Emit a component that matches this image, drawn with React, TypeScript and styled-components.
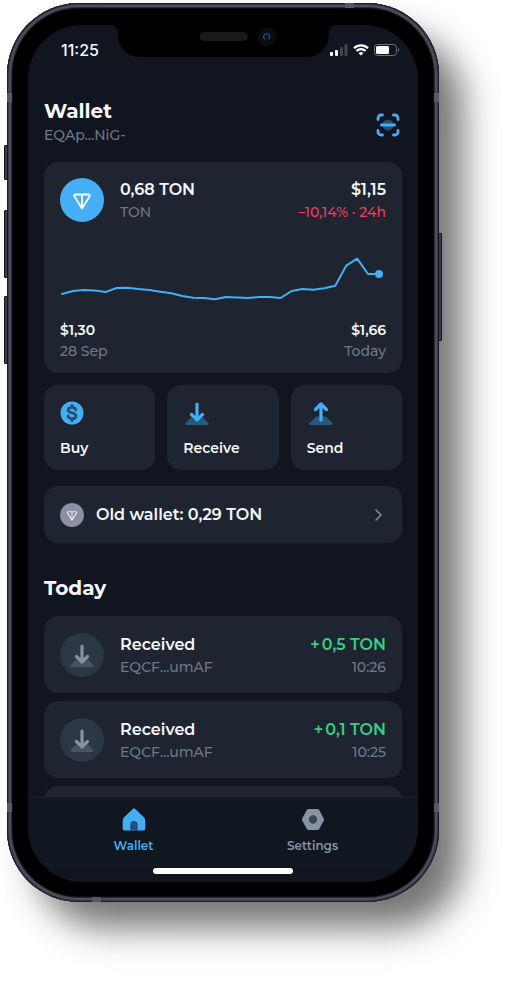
import React from "react";
import styled, { createGlobalStyle } from "styled-components";

const color = {
  page: "#10151f",
  card: "#1e2531",
  text: "#f5f7fa",
  muted: "#707787",
  accent: "#45aef5",
  accentDim: "#28587c",
  negative: "#e93f63",
  positive: "#39cc83",
  icon: "#8994a3",
};

const GlobalStyle = createGlobalStyle`
  *, *::before, *::after { box-sizing: border-box; }
  body {
    margin: 0;
    background: #fff;
    color: ${color.text};
    font-family: Montserrat, Inter, sans-serif;
    -webkit-font-smoothing: antialiased;
  }
  h1, h2, p, ul { margin: 0; padding: 0; }
  ul { list-style: none; }
  button { font: inherit; color: inherit; border: 0; text-align: left; cursor: pointer; }
  svg { display: block; }
`;

const Stage = styled.div`
  display: flex;
  height: 100vh;
  min-height: 640px;
  padding: 3px 77px 82px 7px;
  overflow: hidden;
`;

const Device = styled.div`
  position: relative;
  display: flex;
  flex: 1;
  min-width: 0;
  padding: 22px 21px 20px;
  border-radius: 72px;
  background: #000;
  box-shadow:
    inset 0 0 0 1px #1f1e28,
    inset 0 0 0 2px #3b3947,
    inset 0 0 0 4px #4f4d5c,
    inset 0 0 0 5px #2a2933,
    inset 0 0 0 6px #0c0c10,
    26px 28px 34px -3px rgba(0, 0, 0, 0.52),
    30px 34px 56px rgba(0, 0, 0, 0.05);
`;

const SideKey = styled.span<{ $side: "left" | "right"; $top: number; $size: number }>`
  position: absolute;
  ${(p) => p.$side}: -3px;
  top: ${(p) => p.$top}%;
  width: 4px;
  height: ${(p) => p.$size}%;
  border: 1px solid #14141b;
  border-radius: 1px;
  background: #3b3a47;
`;

const SideBand = styled.span<{ $side: "left" | "right"; $edge: "top" | "bottom" }>`
  position: absolute;
  ${(p) => p.$side}: 0;
  ${(p) => p.$edge}: 90px;
  width: 5px;
  height: 9px;
  background: #5b5862;
`;

const EndBand = styled.span<{ $edge: "top" | "bottom" }>`
  position: absolute;
  ${(p) => p.$edge}: 0;
  ${(p) => (p.$edge === "top" ? "right" : "left")}: 85px;
  width: 9px;
  height: 5px;
  background: #5b5761;
`;

const Screen = styled.main`
  position: relative;
  display: flex;
  flex: 1;
  flex-direction: column;
  min-width: 0;
  overflow: hidden;
  border-radius: 54px;
  background: ${color.page};
`;

const Notch = styled.div`
  position: absolute;
  top: 0;
  left: 50%;
  display: flex;
  align-items: center;
  justify-content: flex-end;
  gap: 9px;
  width: 54%;
  height: 32px;
  padding: 0 52px 9px 0;
  transform: translateX(-50%);
  border-radius: 0 0 22px 22px;
  background: #000;
  &::before, &::after {
    content: "";
    position: absolute;
    top: 0;
    width: 6px;
    height: 6px;
  }
  &::before { right: 100%; background: radial-gradient(circle at 0 100%, transparent 5px, #000 6px); }
  &::after { left: 100%; background: radial-gradient(circle at 100% 100%, transparent 5px, #000 6px); }
`;

const Speaker = styled.span`
  width: 48px;
  height: 9px;
  border-radius: 5px;
  background: #191919;
`;

const StatusBar = styled.div`
  display: flex;
  flex-shrink: 0;
  align-items: center;
  justify-content: space-between;
  height: 49px;
  padding: 0 18px 0 33px;
`;

const Clock = styled.time`
  font-family: Inter, sans-serif;
  font-size: 16px;
  font-weight: 500;
`;

const Indicators = styled.div`
  display: flex;
  align-items: center;
  gap: 5px;
`;

const Header = styled.header`
  display: flex;
  flex-shrink: 0;
  align-items: center;
  justify-content: space-between;
  padding: 23px 16px 17px;
`;

const Heading = styled.h1`
  font-size: 20px;
  font-weight: 700;
  line-height: 28px;
`;

const IconButton = styled.button`
  padding: 8px 0 0;
  background: none;
`;

const Content = styled.div`
  flex: 1;
  min-height: 0;
  padding: 0 16px;
  overflow: hidden;
`;

const Muted = styled.p`
  color: ${color.muted};
  font-size: 14px;
  font-weight: 500;
  line-height: 20px;
`;

const Title = styled.p<{ $tone?: string }>`
  color: ${(p) => p.$tone ?? color.text};
  font-size: 16px;
  font-weight: 600;
  line-height: 24px;
`;

const Change = styled(Muted)`
  color: ${color.negative};
`;

const Card = styled.section`
  padding: 16px 16px 12px;
  border-radius: 14px;
  background: ${color.card};
`;

const AssetRow = styled.div`
  display: flex;
  align-items: center;
  gap: 16px;
`;

const Stack = styled.div<{ $end?: boolean }>`
  flex: ${(p) => (p.$end ? "none" : "1")};
  min-width: 0;
  text-align: ${(p) => (p.$end ? "right" : "left")};
`;

const Avatar = styled.span<{ $size: number; $fill: string }>`
  display: flex;
  flex-shrink: 0;
  align-items: center;
  justify-content: center;
  width: ${(p) => p.$size}px;
  height: ${(p) => p.$size}px;
  border-radius: 50%;
  background: ${(p) => p.$fill};
`;

const ChartArea = styled.div`
  padding: 28px 0 10px;
  svg { width: 100%; height: auto; overflow: visible; }
`;

const ChartLegend = styled.div`
  display: flex;
  justify-content: space-between;
`;

const Price = styled.p`
  font-size: 14px;
  font-weight: 600;
  line-height: 21px;
`;

const Actions = styled.div`
  display: grid;
  grid-template-columns: repeat(3, 1fr);
  gap: 12px;
  margin: 12px 0 16px;
`;

const ActionButton = styled.button`
  display: flex;
  flex-direction: column;
  gap: 13px;
  padding: 16px 16px 12px;
  border-radius: 14px;
  background: ${color.card};
  font-size: 14px;
  font-weight: 600;
  line-height: 20px;
`;

const OldWallet = styled.button`
  display: flex;
  align-items: center;
  gap: 12px;
  width: 100%;
  padding: 16px;
  border-radius: 14px;
  background: ${color.card};
  font-size: 16px;
  font-weight: 600;
  line-height: 25px;
`;

const Grow = styled.span`
  flex: 1;
`;

const SectionTitle = styled.h2`
  padding: 31px 0 14px;
  font-size: 20px;
  font-weight: 700;
  line-height: 28px;
`;

const History = styled.ul`
  display: flex;
  flex-direction: column;
  gap: 8px;
`;

const HistoryItem = styled.li`
  display: flex;
  align-items: center;
  gap: 16px;
  min-height: 77px;
  padding: 16px;
  border-radius: 14px;
  background: ${color.card};
`;

const TabBar = styled.nav`
  display: grid;
  flex-shrink: 0;
  grid-template-columns: 1fr 1fr;
  padding: 10px 16px 14px;
  border-top: 1px solid #1a212c;
  background: #111720;
`;

const Tab = styled.button<{ $active?: boolean }>`
  display: flex;
  flex-direction: column;
  align-items: center;
  gap: 6px;
  padding: 0;
  background: none;
  color: ${(p) => (p.$active ? color.accent : color.icon)};
  font-size: 12px;
  font-weight: 600;
  line-height: 16px;
`;

const HomeIndicator = styled.span`
  flex-shrink: 0;
  align-self: center;
  width: 36%;
  height: 6px;
  margin-bottom: 8px;
  border-radius: 3px;
  background: #fff;
`;

const history = [
  { address: "EQCF...umAF", amount: "+\u20090,5 TON", time: "10:26" },
  { address: "EQCF...umAF", amount: "+\u20090,1 TON", time: "10:25" },
];

const series = [
  44, 41, 40, 40.5, 42, 38, 37.7, 39, 40, 41.7, 43.3, 46, 47.7, 48, 49.3, 47, 47.5, 48, 47, 47, 48,
  41, 39, 39.7, 38.3, 35.7, 15.7, 8.7, 24, 24,
];

const PriceChart = () => {
  const step = 317 / (series.length - 1);
  const points = series.map((y, i) => `${2 + i * step},${y}`).join(" ");
  return (
    <svg viewBox="0 0 326 60" role="img" aria-label="TON price">
      <polyline points={points} fill="none" stroke={color.accent} strokeWidth="2" strokeLinejoin="round" strokeLinecap="round" />
      <circle cx="319" cy={series[series.length - 1]} r="4" fill={color.accent} />
    </svg>
  );
};

const TonMark = ({ size, tone = "#fff" }: { size: number; tone?: string }) => (
  <svg width={size} height={size} viewBox="0 0 20 20" fill="none" stroke={tone} strokeWidth="1.8" strokeLinejoin="round" strokeLinecap="round">
    <path d="M3.5 4.500h13c1.100 0 1.600 1 1 2L10 18.500 2.500 6.500C1.900 5.500 2.400 4.500 3.500 4.500ZM10 4.500v13.500" />
  </svg>
);

const Arrow = ({ up, tone = color.accent, base = color.accentDim }: { up?: boolean; tone?: string; base?: string }) => (
  <svg width="28" height="24" viewBox="0 0 28 24" fill="none">
    <path d={up ? "M10 15.500h8c.7 0 1.200.2 1.700.8l5.600 5.800c.7.8.3 1.900-.7 1.900H3.400c-1 0-1.400-1.100-.7-1.900l5.600-5.800c.5-.6 1-.8 1.700-.8Z" : "M8.200 16.500 14 21l5.800-4.500 5.500 5.600c.7.800.3 1.900-.7 1.900H3.400c-1 0-1.400-1.100-.7-1.900Z"} fill={base} />
    <path
      d={up ? "M14 19V4M8.500 8.500 14 3l5.500 5.500" : "M14 3v15.500M8.500 13.500 14 19l5.500-5.500"}
      stroke={tone}
      strokeWidth="3.200"
      strokeLinecap="round"
      strokeLinejoin="round"
    />
  </svg>
);

const DollarIcon = () => (
  <svg width="24" height="24" viewBox="0 0 24 24" fill="none">
    <circle cx="12" cy="12" r="11.500" fill={color.accent} />
    <path d="M15.800 8.800C15.300 7.200 14 6.400 12 6.400c-2.300 0-3.800 1.100-3.800 2.700 0 3.800 7.700 1.900 7.700 5.800 0 1.700-1.600 2.800-3.900 2.800-2.200 0-3.600-1-4-2.700M12 4.300v2M12 17.800v2" stroke="#235077" strokeWidth="2.800" strokeLinecap="round" />
  </svg>
);

const ScanIcon = () => (
  <svg width="28" height="28" viewBox="0 0 28 28" fill="none">
    <circle cx="14" cy="14" r="5.500" fill="#234f70" />
    <path d="M4 8.500V7a3 3 0 0 1 3-3h1.500M19.500 4H21a3 3 0 0 1 3 3v1.500M24 19.500V21a3 3 0 0 1-3 3h-1.500M8.500 24H7a3 3 0 0 1-3-3v-1.500M7.500 14h13" stroke={color.accent} strokeWidth="2.800" strokeLinecap="round" />
  </svg>
);

const SignalIcon = () => (
  <svg width="18" height="12" viewBox="0 0 18 12">
    <rect x="0" y="8" width="3" height="4" rx="1" fill="#fff" />
    <rect x="5" y="6" width="3" height="6" rx="1" fill="#fff" />
    <rect x="10" y="3" width="3" height="9" rx="1" fill="#41464f" />
    <rect x="14.500" y="0" width="3" height="12" rx="1" fill="#41464f" />
  </svg>
);

const WifiIcon = () => (
  <svg width="16" height="12" viewBox="0 0 16 12" fill="none" stroke="#fff" strokeWidth="2.200">
    <path d="M1 4.200a10 10 0 0 1 14 0M3.500 7a6.400 6.400 0 0 1 9 0" />
    <path d="M8 11.600 5.600 9.300a3.400 3.400 0 0 1 4.800 0Z" fill="#fff" stroke="none" />
  </svg>
);

const BatteryIcon = () => (
  <svg width="26" height="12" viewBox="0 0 26 12" fill="none">
    <rect x="0.500" y="0.500" width="22" height="11" rx="3" stroke="#6c7077" />
    <rect x="2" y="2" width="13" height="8" rx="1.500" fill="#fff" />
    <path d="M24 4v4c1.700-.7 1.700-3.300 0-4Z" fill="#6c7077" />
  </svg>
);

const CameraIcon = () => (
  <svg width="20" height="20" viewBox="0 0 20 20" fill="none">
    <circle cx="10" cy="10" r="9.500" fill="#0c0c0d" />
    <path d="M8.200 12.300a3 3 0 1 1 3.600 0" stroke="#1c4c9c" strokeWidth="1.400" />
  </svg>
);

const HomeIcon = () => (
  <svg width="24" height="24" viewBox="0 0 24 24">
    <path d="M10.500 1.200a2 2 0 0 1 3 0l8.600 8.300c.8.800 1.200 1.700 1.200 2.800v8.200c0 1.200-.7 2-2 2H2.700c-1.300 0-2-.8-2-2v-8.200c0-1.100.4-2 1.200-2.800Z" fill={color.accent} />
    <path d="M8.300 22.500v-5.800a3.700 3.700 0 0 1 7.400 0v5.800Z" fill="#245174" />
  </svg>
);

const SettingsIcon = () => (
  <svg width="24" height="24" viewBox="0 0 24 24">
    <path d="M7.800 1h8.400c1 0 1.700.4 2.200 1.200l4.100 7.700c.6 1.100.6 2.100 0 3.200l-4.100 7.700c-.5.800-1.200 1.200-2.200 1.200H7.800c-1 0-1.700-.4-2.200-1.200l-4.100-7.700c-.6-1.100-.6-2.100 0-3.200l4.100-7.700C6.100 1.400 6.800 1 7.800 1Z" fill={color.icon} />
    <circle cx="12" cy="11.500" r="4.200" fill="#3d4754" />
  </svg>
);

const ChevronIcon = () => (
  <svg width="16" height="16" viewBox="0 0 16 16" fill="none">
    <path d="m6 3 5 5-5 5" stroke="#7f8796" strokeWidth="1.700" strokeLinecap="round" strokeLinejoin="round" />
  </svg>
);

export default function App() {
  return (
    <>
      <GlobalStyle />
      <Stage>
        <Device>
          <SideKey $side="left" $top={15.8} $size={3.9} />
          <SideKey $side="left" $top={23} $size={7.6} />
          <SideKey $side="left" $top={32.6} $size={7.6} />
          <SideKey $side="right" $top={25.6} $size={12} />
          <SideBand $side="left" $edge="top" />
          <SideBand $side="right" $edge="top" />
          <SideBand $side="left" $edge="bottom" />
          <SideBand $side="right" $edge="bottom" />
          <EndBand $edge="top" />
          <EndBand $edge="bottom" />
          <Screen>
            <Notch>
              <Speaker />
              <CameraIcon />
            </Notch>
            <StatusBar>
              <Clock>11:25</Clock>
              <Indicators>
                <SignalIcon />
                <WifiIcon />
                <BatteryIcon />
              </Indicators>
            </StatusBar>
            <Header>
              <div>
                <Heading>Wallet</Heading>
                <Muted>EQAp...NiG-</Muted>
              </div>
              <IconButton aria-label="Scan QR code">
                <ScanIcon />
              </IconButton>
            </Header>
            <Content>
              <Card>
                <AssetRow>
                  <Avatar $size={44} $fill={color.accent}>
                    <TonMark size={20} />
                  </Avatar>
                  <Stack>
                    <Title>0,68 TON</Title>
                    <Muted>TON</Muted>
                  </Stack>
                  <Stack $end>
                    <Title>$1,15</Title>
                    <Change>–10,14% · 24h</Change>
                  </Stack>
                </AssetRow>
                <ChartArea>
                  <PriceChart />
                </ChartArea>
                <ChartLegend>
                  <Stack>
                    <Price>$1,30</Price>
                    <Muted>28 Sep</Muted>
                  </Stack>
                  <Stack $end>
                    <Price>$1,66</Price>
                    <Muted>Today</Muted>
                  </Stack>
                </ChartLegend>
              </Card>
              <Actions>
                <ActionButton>
                  <DollarIcon />
                  Buy
                </ActionButton>
                <ActionButton>
                  <Arrow />
                  Receive
                </ActionButton>
                <ActionButton>
                  <Arrow up />
                  Send
                </ActionButton>
              </Actions>
              <OldWallet>
                <Avatar $size={24} $fill="#8b90a4">
                  <TonMark size={12} tone="#e4e6ee" />
                </Avatar>
                <Grow>Old wallet: 0,29 TON</Grow>
                <ChevronIcon />
              </OldWallet>
              <SectionTitle>Today</SectionTitle>
              <History>
                {history.map((item) => (
                  <HistoryItem key={item.time}>
                    <Avatar $size={44} $fill="#2d3643">
                      <Arrow tone="#8791a0" base="#4a5361" />
                    </Avatar>
                    <Stack>
                      <Title>Received</Title>
                      <Muted>{item.address}</Muted>
                    </Stack>
                    <Stack $end>
                      <Title $tone={color.positive}>{item.amount}</Title>
                      <Muted>{item.time}</Muted>
                    </Stack>
                  </HistoryItem>
                ))}
                <HistoryItem aria-hidden="true" />
              </History>
            </Content>
            <TabBar>
              <Tab $active aria-current="page">
                <HomeIcon />
                Wallet
              </Tab>
              <Tab>
                <SettingsIcon />
                Settings
              </Tab>
            </TabBar>
            <HomeIndicator />
          </Screen>
        </Device>
      </Stage>
    </>
  );
}
